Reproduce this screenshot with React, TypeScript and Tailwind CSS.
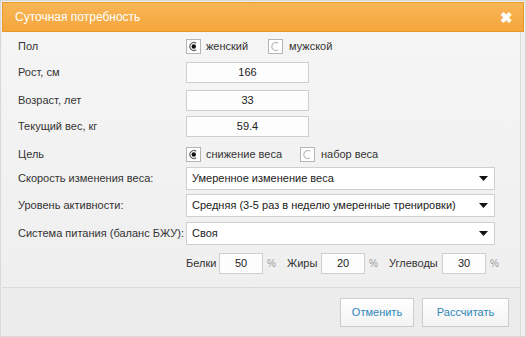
import React from 'react';

const font = { fontFamily: '"Liberation Sans", Arial, sans-serif' };

const Radio = ({ checked }: { checked?: boolean }) => (
    <span className="w-[15px] h-[15px] border border-[#b5b5b5] bg-white flex items-center justify-center shrink-0">
        <svg width="11" height="11" viewBox="0 0 11 11">
            <path d="M8.2 2.2 A4 4 0 1 0 8.2 8.8" fill="none" stroke={checked ? '#666' : '#bbb'} strokeWidth="1.2" />
            {checked && <circle cx="5.8" cy="5.5" r="2.2" fill="#111" />}
        </svg>
    </span>
);

const Caret = () => (
    <svg width="9" height="5" viewBox="0 0 9 5" className="shrink-0">
        <path d="M0 0 H9 L4.5 5 Z" fill="#111" />
    </svg>
);

const Label = ({ children }: { children: React.ReactNode }) => (
    <div className="w-[168px] shrink-0 whitespace-nowrap text-[11px] text-[#333]">{children}</div>
);

const NumInput = ({ value }: { value: string }) => (
    <div className="w-[123px] h-[21px] border border-[#cfcfcf] bg-[#fdfdfd] flex items-center justify-center text-[11px] text-[#222]">
        {value}
    </div>
);

const Select = ({ value }: { value: string }) => (
    <div className="w-[309px] h-[23px] border border-[#cfcfcf] bg-white flex items-center justify-between pl-[5px] pr-[6px] text-[11px] text-[#222] whitespace-nowrap">
        <span>{value}</span>
        <Caret />
    </div>
);

const Macro = ({ label, value, w }: { label: string; value: string; w: string }) => (
    <div className="flex items-center">
        <span className={`${w} text-[11px] text-[#333]`}>{label}</span>
        <div className="w-[44px] h-[21px] border border-[#cfcfcf] bg-[#fdfdfd] flex items-center justify-center text-[11px] text-[#222]">
            {value}
        </div>
        <span className="w-[24px] pl-[4px] text-[10px] text-[#999]">%</span>
    </div>
);

export default function App() {
    return (
        <div style={font} className="w-[526px] h-[337px] bg-[#f0f0f0] border border-[#d9d9d9] flex flex-col overflow-hidden">
            <div className="mx-[1px] mt-[1px] h-[30px] shrink-0 bg-gradient-to-b from-[#f8b655] to-[#f5a63c] border border-[#e99a2e] flex items-center justify-between pl-[12px] pr-[10px]">
                <span className="text-white text-[12px]">Суточная потребность</span>
                <span className="text-white text-[15px] font-bold leading-none">✖</span>
            </div>

            <div className="flex-1 bg-gradient-to-b from-[#f5f5f5] to-[#efefef] border-r border-[#dcdcdc] mr-[4px] ml-[1px] pl-[16px] flex flex-col">
                <div className="flex items-center h-[16px] mt-[6px]">
                    <Label>Пол</Label>
                    <div className="flex items-center gap-[5px]">
                        <Radio checked />
                        <span className="text-[11px] text-[#333] w-[57px]">женский</span>
                        <Radio />
                        <span className="text-[11px] text-[#333] pl-[1px]">мужской</span>
                    </div>
                </div>
                <div className="flex items-center h-[21px] mt-[8px]">
                    <Label>Рост, см</Label>
                    <NumInput value="166" />
                </div>
                <div className="flex items-center h-[21px] mt-[7px]">
                    <Label>Возраст, лет</Label>
                    <NumInput value="33" />
                </div>
                <div className="flex items-center h-[21px] mt-[5px]">
                    <Label>Текущий вес, кг</Label>
                    <NumInput value="59.4" />
                </div>
                <div className="flex items-center h-[16px] mt-[9px]">
                    <Label>Цель</Label>
                    <div className="flex items-center gap-[5px]">
                        <Radio checked />
                        <span className="text-[11px] text-[#333] w-[89px]">снижение веса</span>
                        <Radio />
                        <span className="text-[11px] text-[#333] pl-[1px]">набор веса</span>
                    </div>
                </div>
                <div className="flex items-center h-[23px] mt-[5px]">
                    <Label>Скорость изменения веса:</Label>
                    <Select value="Умеренное изменение веса" />
                </div>
                <div className="flex items-center h-[23px] mt-[4px]">
                    <Label>Уровень активности:</Label>
                    <Select value="Средняя (3-5 раз в неделю умеренные тренировки)" />
                </div>
                <div className="flex items-center h-[23px] mt-[5px]">
                    <Label>Система питания (баланс БЖУ):</Label>
                    <Select value="Своя" />
                </div>
                <div className="flex items-center h-[21px] mt-[8px] pl-[168px]">
                    <Macro label="Белки" value="50" w="w-[33px]" />
                    <Macro label="Жиры" value="20" w="w-[34px]" />
                    <Macro label="Углеводы" value="30" w="w-[53px]" />
                </div>
            </div>

            <div className="h-[49px] shrink-0 border-t border-[#dadada] bg-[#ececec] ml-[1px] mr-[4px] border-r border-r-[#dcdcdc] flex items-center justify-end gap-[8px] pr-[11px]">
                <button className="h-[29px] w-[74px] border border-[#cdcdcd] bg-gradient-to-b from-white to-[#f3f3f3] text-[11px] text-[#2f87b8]">
                    Отменить
                </button>
                <button className="h-[29px] w-[87px] border border-[#cdcdcd] bg-gradient-to-b from-white to-[#f3f3f3] text-[11px] text-[#2f87b8]">
                    Рассчитать
                </button>
            </div>
        </div>
    );
}
